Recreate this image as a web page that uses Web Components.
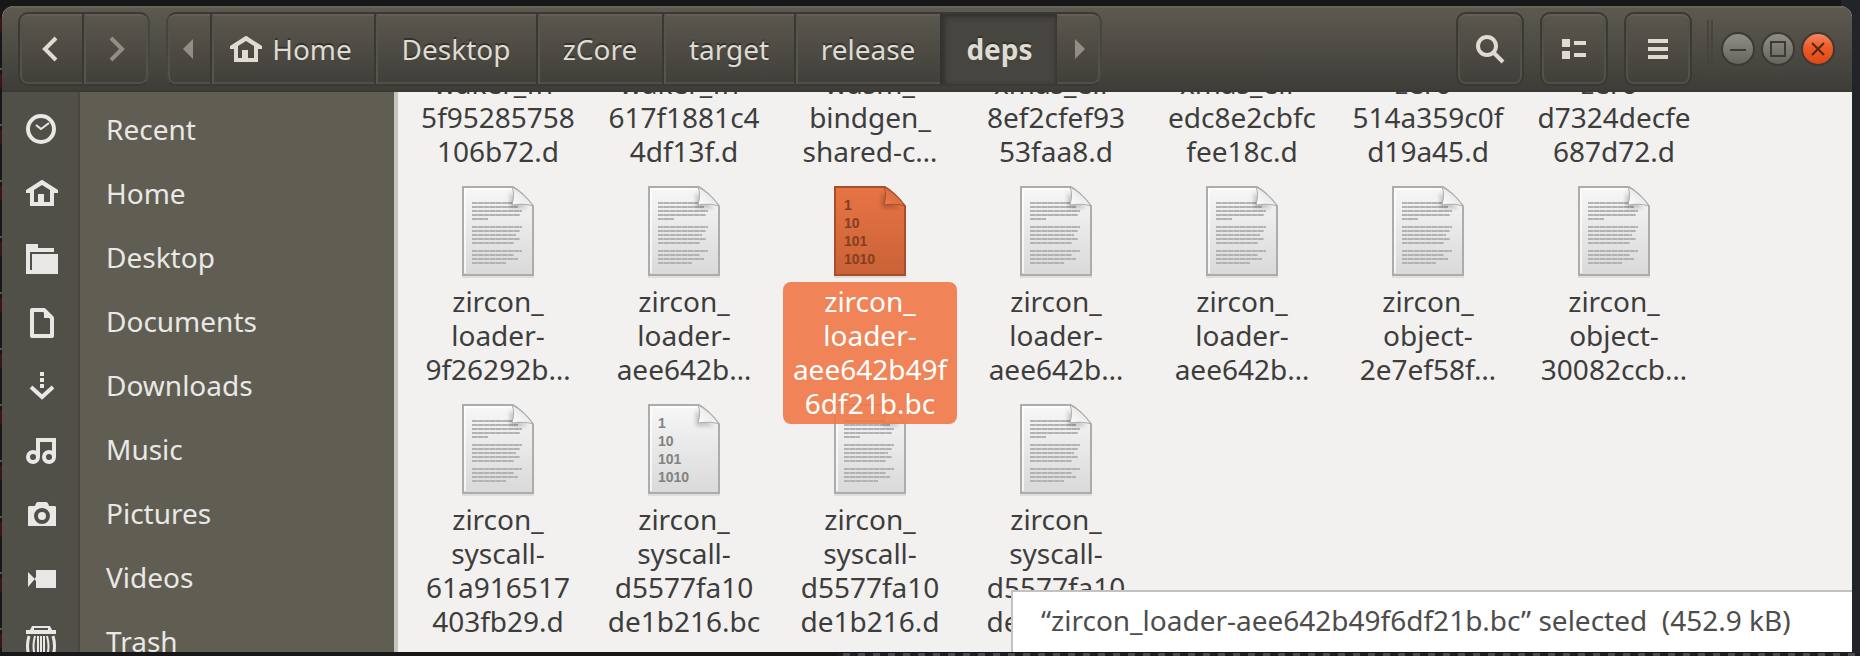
<!DOCTYPE html>
<html lang="en">
<head>
<meta charset="utf-8">
<title>deps</title>
<style>
html,body{margin:0;height:100%;overflow:hidden}
body{background:#171717;font:28px/34px "Noto Sans","Open Sans",sans-serif;color:#3d3d3d}
</style>
</head>
<body>
<desk-top>
<file-manager>
  <header-bar slot="header"></header-bar>
  <places-sidebar slot="side">
    <place-row icon="recent">Recent</place-row>
    <place-row icon="home">Home</place-row>
    <place-row icon="desktop">Desktop</place-row>
    <place-row icon="documents">Documents</place-row>
    <place-row icon="downloads">Downloads</place-row>
    <place-row icon="music">Music</place-row>
    <place-row icon="pictures">Pictures</place-row>
    <place-row icon="videos">Videos</place-row>
    <place-row icon="trash">Trash</place-row>
  </places-sidebar>
  <file-grid>
    <file-item>waker_fn-<br>5f95285758<br>106b72.d</file-item>
    <file-item>waker_fn-<br>617f1881c4<br>4df13f.d</file-item>
    <file-item>wasm_<br>bindgen_<br>shared-c…</file-item>
    <file-item>xmas_elf-<br>8ef2cfef93<br>53faa8.d</file-item>
    <file-item>xmas_elf-<br>edc8e2cbfc<br>fee18c.d</file-item>
    <file-item>zero-<br>514a359c0f<br>d19a45.d</file-item>
    <file-item>zero-<br>d7324decfe<br>687d72.d</file-item>
    <file-item>zircon_<br>loader-<br>9f26292b…</file-item>
    <file-item>zircon_<br>loader-<br>aee642b…</file-item>
    <file-item kind="binary" selected>zircon_<br>loader-<br>aee642b49f<br>6df21b.bc</file-item>
    <file-item>zircon_<br>loader-<br>aee642b…</file-item>
    <file-item>zircon_<br>loader-<br>aee642b…</file-item>
    <file-item>zircon_<br>object-<br>2e7ef58f…</file-item>
    <file-item>zircon_<br>object-<br>30082ccb…</file-item>
    <file-item>zircon_<br>syscall-<br>61a916517<br>403fb29.d</file-item>
    <file-item kind="binary">zircon_<br>syscall-<br>d5577fa10<br>de1b216.bc</file-item>
    <file-item>zircon_<br>syscall-<br>d5577fa10<br>de1b216.d</file-item>
    <file-item>zircon_<br>syscall-<br>d5577fa10<br>de1b216.d</file-item>
  </file-grid>
  <status-float slot="status">“zircon_loader-aee642b49f6df21b.bc” selected&nbsp; (452.9 kB)</status-float>
</file-manager>
</desk-top>
<script>
const HOME = '<path fill="currentColor" fill-rule="evenodd" d="M14 4Q16 2 18 4L32 13V16H28V29H4V16H0V13ZM8 13V25H12V17H18V25H24V13L16 8Z"/>';
const ICONS = {
  home: HOME,
  recent: '<circle cx="15" cy="16" r="13" fill="none" stroke="currentColor" stroke-width="4"/><path d="M10 12L15 16L23 10" fill="none" stroke="currentColor" stroke-width="2"/>',
  desktop: '<path fill="currentColor" d="M0 3H12V7H28V11H4V29H6V13H32V33H0Z"/>',
  documents: '<path d="M6 5H18L26 13V31H6Z" fill="none" stroke="currentColor" stroke-width="4" stroke-linejoin="round"/><path fill="currentColor" d="M18 4V13H27Z"/>',
  downloads: '<path fill="currentColor" d="M14 3h4v4h-4zM14 9h4v4h-4zM14 15h4v4h-4z"/><path d="M5 18L16 28L27 18" fill="none" stroke="currentColor" stroke-width="4"/>',
  music: '<g fill="none" stroke="currentColor" stroke-width="4"><path d="M12 24V7H28V24"/><circle cx="7" cy="24" r="5"/><circle cx="23" cy="24" r="5"/></g>',
  pictures: '<path fill="currentColor" fill-rule="evenodd" d="M2 10Q2 9 4 9H9Q10 5 12 5H20Q22 5 23 9H28Q30 9 30 10V29H2ZM16 11A8 8 0 1 0 16 27A8 8 0 1 0 16 11Z"/><circle cx="16" cy="19" r="4" fill="currentColor"/>',
  videos: '<path fill="currentColor" d="M2 11L8 17V19L2 26ZM10 9H30V27H10V20L8 18L10 16Z"/>',
  trash: '<path fill="currentColor" fill-rule="evenodd" d="M6 1H24L26 5H30V9H0V5H4ZM8 3V5H22V3Z"/><g fill="none" stroke="currentColor"><path stroke-width="3" d="M3 11Q0 21 3 31M27 11Q30 21 27 31"/><path stroke-width="2" d="M9 11Q6 21 9 31M21 11Q24 21 21 31M12 11V31M15 11V31M18 11V31"/></g>',
  back: '<path d="M21 5L10 16L21 27" fill="none" stroke="currentColor" stroke-width="4"/>',
  forward: '<path d="M11 5L22 16L11 27" fill="none" stroke="currentColor" stroke-width="4"/>',
  panleft: '<path d="M20 6L10 16L20 26Z" fill="currentColor"/>',
  panright: '<path d="M12 6L22 16L12 26Z" fill="currentColor"/>',
  search: '<circle cx="13" cy="13" r="9" fill="none" stroke="currentColor" stroke-width="4"/><path d="M19 19L29 29" stroke="currentColor" stroke-width="4"/>',
  list: '<path fill="currentColor" d="M4 6h8v8H4zM4 18h8v8H4zM16 8h12v4H16zM16 20h12v4H16z"/>',
  menu: '<path fill="currentColor" d="M6 6h20v4H6zM6 14h20v4H6zM6 22h20v4H6z"/>',
  minimize: '<path fill="currentColor" d="M8 16h16v2H8z"/>',
  maximize: '<path d="M9 9h14v14H9z" fill="none" stroke="currentColor" stroke-width="2"/>',
  close: '<path d="M10 10L22 22M22 10L10 22" stroke="currentColor" stroke-width="2"/>'
};
const svg = n => `<svg width="32" height="32" viewBox="0 0 32 32" aria-hidden="true">${ICONS[n]}</svg>`;
const define = (name, render) => customElements.define(name, class extends HTMLElement {
  constructor(){ super(); this.attachShadow({mode:'open'}); }
  connectedCallback(){ this.shadowRoot.innerHTML = render(this); }
});

define('desk-top', () => `<style>
:host{display:block;position:relative;height:100vh;box-sizing:border-box;padding:6px 8px 4px 2px;overflow:hidden;background:linear-gradient(90deg,#171717 0 99%,#22242a 99%)}
.edge{position:absolute;left:0;top:18px;bottom:0;width:2px;background:repeating-linear-gradient(#3a1616 0 14px,#17171b 14px 50px,#55564f 50px 52px,#17171b 52px 56px)}
.under{position:absolute;left:45%;right:0;bottom:0;height:3px;background:repeating-linear-gradient(90deg,#1c1e21 0 6px,#4a4c4e 6px 13px,#1c1e21 13px 15px)}
</style><div class="edge"></div><div class="under"></div><slot></slot>`);

define('file-manager', () => `<style>
:host{display:grid;position:relative;height:100%;grid-template:86px minmax(0,1fr)/396px minmax(0,1fr);border-radius:12px 12px 0 0;overflow:hidden;background:#f2f1ef}
.head{grid-column:1/3;display:grid}
.side,.files{overflow:hidden;min-height:0}
.status{position:absolute;right:0;bottom:0;z-index:3}
</style><div class="head"><slot name="header"></slot></div><div class="side"><slot name="side"></slot></div><main class="files"><slot></slot></main><div class="status"><slot name="status"></slot></div>`);

define('header-bar', () => `<style>
:host{display:flex;align-items:center;box-sizing:border-box;padding:0 17px 0 16px;background:linear-gradient(#5d5a50,#3d3c37);box-shadow:inset 0 2px #66645a,inset 0 -2px #3a3934;color:#dfdbd2}
button{font:inherit;color:inherit;margin:0;padding:0;border:0;background:none;display:flex;align-items:center;justify-content:center;height:70px;text-shadow:0 -2px #33322e}
svg{display:block;flex:none}
.group,.tool{border:2px solid #3a3934;border-radius:10px;box-shadow:inset 0 2px #615f56,inset 2px 0 #53524a,inset -2px 0 #53524a,inset 0 -2px #504f49}
.group{display:flex;box-sizing:border-box;height:74px}
.group button+button{border-left:2px solid #393833;box-shadow:inset 2px 0 #56554d}
.history{margin-right:16px}
.history button{width:62px}
.history button+button{width:66px}
.history{border-right-color:#45443e}
.dim{color:#918e86}
.path{border-left-color:#45443e;border-right-color:#45443e}
.pan{width:42px}
.crumb{width:var(--w);box-sizing:border-box}
.home{gap:10px}
.home svg{margin-left:-4px}
.group button.current{font-weight:700;border-left:2px solid #33322e;background:#464540;box-shadow:inset 3px 3px 5px #33322e,inset -2px 0 3px #3a3934}
.group .current+.pan{border-left:0;width:43px;box-shadow:none}
.tools{display:flex;gap:16px;margin-left:auto}
.tool{width:68px;height:74px;box-sizing:border-box}
.sep{width:2px;height:58px;border:2px solid #45443e;border-width:0 2px;margin:0 8px 0 15px}
.win{display:flex;gap:6px}
.win button{width:34px;height:34px;box-sizing:border-box;border:2px solid #3b3a35;border-radius:50%;background:linear-gradient(#8f8e87,#65645d);color:#3b3a35}
.win .close{background:linear-gradient(#f58563,#f05a28 45%,#dc4a17);color:#4c2a12}
</style>
<div class="group history"><button aria-label="Back">${svg('back')}</button><button class="dim" aria-label="Forward" >${svg('forward')}</button></div>
<nav class="group path" aria-label="Path">
<button class="pan dim" aria-label="Scroll left">${svg('panleft')}</button>
<button class="crumb home" style="--w:164px">${svg('home')}Home</button>
<button class="crumb" style="--w:162px">Desktop</button>
<button class="crumb" style="--w:126px">zCore</button>
<button class="crumb" style="--w:132px">target</button>
<button class="crumb" style="--w:146px">release</button>
<button class="crumb current" style="--w:117px">deps</button>
<button class="pan dim" aria-label="Scroll right">${svg('panright')}</button>
</nav>
<div class="tools"><button class="tool" aria-label="Search">${svg('search')}</button><button class="tool" aria-label="View as list">${svg('list')}</button><button class="tool" aria-label="Menu">${svg('menu')}</button></div>
<div class="sep"></div>
<div class="win"><button aria-label="Minimize">${svg('minimize')}</button><button aria-label="Maximize">${svg('maximize')}</button><button class="close" aria-label="Close">${svg('close')}</button></div>`);

define('places-sidebar', () => `<style>
:host{display:block;height:100%;box-sizing:border-box;padding-top:5px;border-right:4px solid #c6c4c1;background:linear-gradient(90deg,#505048 0 76px,#48473f 76px 78px,#605e52 78px)}
</style><nav aria-label="Places"><slot></slot></nav>`);

define('place-row', el => `<style>
:host{display:block}
a{display:flex;align-items:center;gap:48px;height:64px;padding-left:24px;color:#e9e8e6;text-decoration:none}
svg{display:block;overflow:visible}
</style><a href="#">${svg(el.getAttribute('icon'))}<slot></slot></a>`);

/* the view is scrolled part of the way through its first visible row */
define('file-grid', () => `<style>
:host{display:grid;grid-template-columns:repeat(auto-fill,186px);grid-auto-rows:218px;padding-left:7px;margin-top:-124px}
</style><slot></slot>`);

const bars = [[16,50],[20,46],[24,50],[28,48],[32,16],[40,50],[44,48],[48,44],[52,48],[56,42],[64,50],[68,42],[72,46],[76,34]];
define('file-item', el => {
  const sel = el.hasAttribute('selected'), bin = el.getAttribute('kind') === 'binary';
  const c = sel ? ['#e87445','#c96237','#a84e2b','#f07c4c','#83401f'] : ['#f7f7f7','#d9d9d9','#acacac','#ffffff','#828282'];
  const body = bin
    ? ['1','10','101','1010'].map((t,i)=>`<text x="10" y="${24+i*18}" fill="${c[4]}">${t}</text>`).join('')
    : bars.map(([y,w])=>`<path d="M10 ${y+1}h${w}" stroke="#c4c4c4" stroke-width="2"/><path d="M10 ${y+1}h${w}" stroke="#b2b2b2" stroke-width="2" stroke-dasharray="5 1"/>`).join('');
  return `<style>
:host{display:flex;flex-direction:column;align-items:center;gap:6px}
svg{display:block;flex:none;overflow:visible;font:bold 14px "Liberation Sans",sans-serif}
.label{box-sizing:border-box;min-width:150px;padding:2px 8px 4px;border-radius:8px;text-align:center;white-space:nowrap}
:host([selected]) .label{position:relative;z-index:1;width:174px;padding:2px 0 4px;background:rgba(240,119,70,.9);color:#fff}
</style><svg width="72" height="90" viewBox="0 0 72 90" aria-hidden="true">
<defs><linearGradient id="g" x2="0" y2="1"><stop stop-color="${c[0]}"/><stop offset="1" stop-color="${c[1]}"/></linearGradient>
<linearGradient id="f" x1="0" y1="1" x2="1" y2="0"><stop stop-color="${c[3]}"/><stop offset="1" stop-color="${c[1]}"/></linearGradient>
<filter id="s" x="-50%" y="-50%" width="200%" height="200%"><feGaussianBlur stdDeviation="2"/></filter></defs>
<path d="M0 90H72V92H0Z" fill="#000" opacity=".08"/>
<path d="M1 1H51Q60 6 71 20V89H1Z" fill="url(#g)" stroke="${c[2]}" stroke-width="2"/>
${sel?'':'<path d="M3 87V3H50" fill="none" stroke="#fff" stroke-width="2" opacity=".7"/>'}${body}
<path d="M48 6V22H66Z" fill="#000" opacity=".2" filter="url(#s)"/>
<path d="M50 1Q53 8 50 19Q62 17 71 20Q62 7 50 1Z" fill="url(#f)" stroke="${c[2]}" stroke-width="1"/></svg>
<div class="label"><slot></slot></div>`;
});

define('status-float', () => `<style>
:host{display:block;box-sizing:border-box;min-width:841px;height:62px;padding:11px 28px;border:2px solid #c4c2bf;border-width:2px 0 0 2px;background:#fff;color:#4d4d4d;white-space:nowrap}
</style><slot></slot>`);
</script>
</body>
</html>
